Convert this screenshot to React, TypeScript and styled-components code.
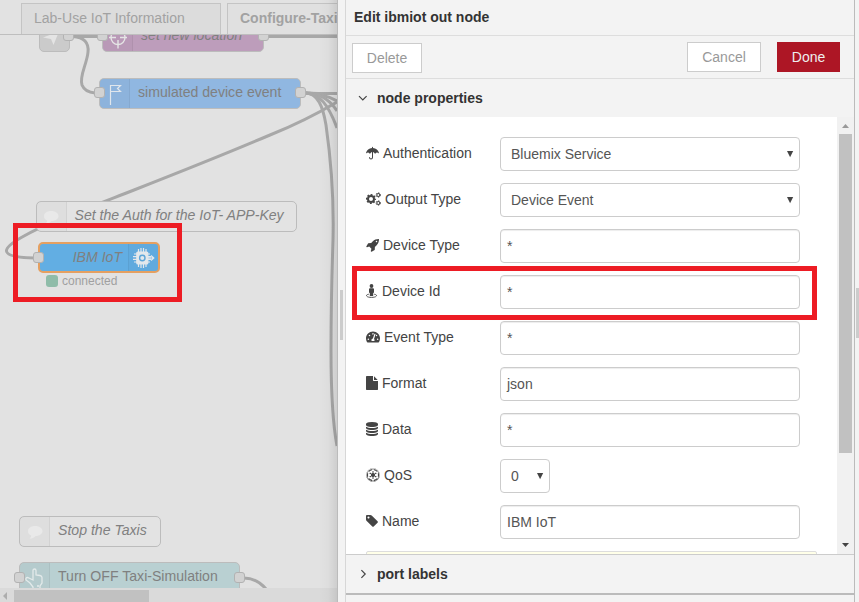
import React from 'react';
import styled, { createGlobalStyle, css } from 'styled-components';
import { FaTachometerAlt, FaEmpire } from 'react-icons/fa';

const Global = createGlobalStyle`
  * { box-sizing: border-box; }
  html, body { margin: 0; padding: 0; overflow: hidden; }
  body { font-family: "Liberation Sans", Arial, sans-serif; font-size: 14px; color: #444; }
`;

const Page = styled.div`
  position: relative;
  display: flex;
  width: 859px;
  height: 602px;
  background: #f3f3f3;
  overflow: hidden;
`;

/* ---------- workspace ---------- */

const Workspace = styled.section`
  width: 337px;
  flex: none;
  display: flex;
  flex-direction: column;
  position: relative;
  background: #e2e2e2;
  overflow: hidden;
`;

const EdgeShade = styled.div`
  position: absolute;
  top: 0;
  right: 0;
  bottom: 0;
  width: 18px;
  background: linear-gradient(to right, rgba(0, 0, 0, 0), rgba(0, 0, 0, 0.02) 50%, rgba(0, 0, 0, 0.09));
`;

const TabBar = styled.div`
  height: 35px;
  flex: none;
  display: flex;
  gap: 6px;
  padding: 3px 0 0 21px;
  border-bottom: 1px solid #bebebe;
`;

const Tab = styled.div<{ $active?: boolean }>`
  width: 200px;
  flex: none;
  border: 1px solid #c4c4c4;
  border-bottom: none;
  padding-left: 12px;
  line-height: 29px;
  white-space: nowrap;
  color: #a2a2a2;
  background: ${(p) => (p.$active ? '#e0e0e0' : '#dcdcdc')};
  font-weight: ${(p) => (p.$active ? 'bold' : 'normal')};
`;

const Canvas = styled.div`
  flex: 1;
  position: relative;
  overflow: hidden;
`;

const Wires = styled.svg`
  position: absolute;
  left: 0;
  top: 0;
  fill: none;
  stroke: #a8a8a8;
  stroke-width: 3;
`;

const Node = styled.div<{ $x: number; $y: number; $w: number; $bg: string; $selected?: boolean; $italic?: boolean }>`
  position: absolute;
  left: ${(p) => p.$x}px;
  top: ${(p) => p.$y}px;
  width: ${(p) => p.$w}px;
  height: 31px;
  display: flex;
  border-radius: 5px;
  border: ${(p) => (p.$selected ? '2px solid #e5a061' : '1.5px solid #bcbcbc')};
  background: ${(p) => p.$bg};
  color: #808080;
  font-style: ${(p) => (p.$italic ? 'italic' : 'normal')};
  white-space: nowrap;
`;

const NodeIcon = styled.div<{ $side?: 'right' }>`
  width: 30px;
  flex: none;
  display: flex;
  align-items: center;
  justify-content: center;
  background: rgba(0, 0, 0, 0.02);
  ${(p) => p.$side === 'right'
    ? css`order: 2; border-left: 1px solid rgba(0, 0, 0, 0.05);`
    : css`border-right: 1px solid rgba(0, 0, 0, 0.05);`}
`;

const NodeLabel = styled.span<{ $end?: boolean }>`
  flex: 1;
  padding: 0 ${(p) => (p.$end ? 6 : 8)}px 0 8px;
  line-height: 27px;
  font-size: 14.1px;
  text-align: ${(p) => (p.$end ? 'right' : 'left')};
`;

const Port = styled.i<{ $x: number; $y: number }>`
  position: absolute;
  left: ${(p) => p.$x}px;
  top: ${(p) => p.$y}px;
  width: 11px;
  height: 11px;
  border: 1.5px solid #b2b2b2;
  border-radius: 3px;
  background: #d2d2d2;
`;

const Status = styled.div`
  position: absolute;
  left: 46px;
  top: 240px;
  height: 12px;
  display: flex;
  align-items: center;
  gap: 4px;
  font-size: 12px;
  line-height: 12px;
  color: #a0a0a0;
`;

const StatusDot = styled.i`
  width: 12px;
  height: 12px;
  border-radius: 3px;
  background: #8fbca9;
`;

const HorizontalScroll = styled.div`
  height: 14px;
  flex: none;
  display: flex;
  align-items: center;
  background: #dadada;
`;

const ScrollLeft = styled.i`
  margin: 2px 7px 0 3px;
  border: 4px solid transparent;
  border-left: none;
  border-right-color: #adadad;
`;

const HorizontalThumb = styled.div`
  width: 135px;
  height: 12px;
  margin-top: 2px;
  background: #c1c1c1;
`;

/* ---------- editor tray ---------- */

const Separator = styled.div`
  width: 8px;
  flex: none;
  display: flex;
  align-items: center;
  padding: 27px 0 0 2px;
  border-left: 1px solid #bbb;
`;

const Grip = styled.div`
  width: 3px;
  height: 50px;
  background: #ccc;
`;

const Tray = styled.section`
  width: 510px;
  flex: none;
  display: flex;
  flex-direction: column;
  border-left: 1px solid #d7d7d7;
  border-right: 1px solid #bbb;
`;

const TrayHeader = styled.header`
  height: 36px;
  flex: none;
  padding-left: 8px;
  border-bottom: 1px solid #ddd;
  font-weight: bold;
  line-height: 34px;
  color: #333;
`;

const Toolbar = styled.div`
  height: 43px;
  flex: none;
  display: flex;
  align-items: flex-start;
  padding: 6px 14px 0 6px;
  border-bottom: 1px solid #ddd;
`;

const Button = styled.button<{ $kind?: 'delete' | 'primary' }>`
  height: 30px;
  width: 74px;
  padding: 0;
  border: 1px solid #ccc;
  background: #fff;
  color: #999;
  font: 14px/28px "Liberation Sans", Arial, sans-serif;
  ${(p) => p.$kind === 'delete' && css`width: 70px; margin: 1px auto 0 0;`}
  ${(p) => p.$kind === 'primary' && css`
    width: 63px;
    margin-left: 16px;
    background: #ad1625;
    border-color: #ad1625;
    color: #eee;
  `}
`;

const SectionHeader = styled.div<{ $footer?: boolean }>`
  height: ${(p) => (p.$footer ? 41 : 38)}px;
  flex: none;
  display: flex;
  align-items: center;
  gap: 9px;
  padding: ${(p) => (p.$footer ? '0 0 1px 12px' : '0 0 0 12px')};
  border-top: ${(p) => (p.$footer ? '1px solid #ccc' : 'none')};
  border-bottom: ${(p) => (p.$footer ? '2px solid #bbb' : 'none')};
  font-weight: bold;
  color: #333;
`;

const Body = styled.div`
  height: 437px;
  flex: none;
  display: flex;
  background: #fff;
  overflow: hidden;
`;

const Form = styled.div`
  flex: 1;
  padding: 20px 20px 0;
  display: flex;
  flex-direction: column;
`;

const FormRow = styled.div`
  height: 34px;
  margin-bottom: 12px;
  flex: none;
  display: flex;
`;

const Label = styled.label`
  width: 134px;
  flex: none;
  height: 32px;
  display: flex;
  align-items: center;
  gap: 4px;
  svg { display: block; flex: none; }
`;

const Field = styled.div<{ $select?: boolean; $small?: boolean }>`
  width: ${(p) => (p.$small ? 50 : 300)}px;
  height: 34px;
  display: flex;
  align-items: center;
  justify-content: space-between;
  padding: ${(p) => (p.$select ? '0 5px 0 10px' : '0 6px')};
  border: 1px solid #ccc;
  border-radius: 4px;
  box-shadow: ${(p) => (p.$select ? 'none' : 'inset 0 1px 1px rgba(0, 0, 0, 0.075)')};
  color: #555;
`;

const Tip = styled.div`
  width: 451px;
  height: 40px;
  flex: none;
  background: #ffffe8;
  border: 1px solid #ddd;
  border-radius: 2px;
`;

const VerticalScroll = styled.div`
  width: 17px;
  flex: none;
  display: flex;
  flex-direction: column;
  align-items: center;
  background: #f1f1f1;
`;

const VerticalThumb = styled.div`
  width: 13px;
  height: 319px;
  margin-bottom: auto;
  background: #c1c1c1;
`;

const Arrow = styled.svg`
  display: block;
  width: 7px;
  height: 4px;
  flex: none;
`;

const UpArrow = styled(Arrow)`margin: 7px 0 6px;`;
const DownArrow = styled(Arrow)`margin-bottom: 7px;`;

const RightEdge = styled.div`
  width: 4px;
  display: flex;
  align-items: center;
  justify-content: flex-end;
  padding-top: 24px;
`;

const Highlight = styled.div<{ $x: number; $y: number; $w: number; $h: number }>`
  position: absolute;
  left: ${(p) => p.$x}px;
  top: ${(p) => p.$y}px;
  width: ${(p) => p.$w}px;
  height: ${(p) => p.$h}px;
  border: 5px solid #ed1c24;
`;

/* ---------- drawings ---------- */

const Caret = () => (
  <svg width="8" height="8" viewBox="0 0 8 8"><path d="M1 1h6.200L4.100 7.200z" fill="#444" /></svg>
);

const Chevron = ({ open }: { open?: boolean }) => (
  <svg width="10" height="10" viewBox="0 0 10 10" fill="none" stroke="#444" strokeWidth="1.2">
    <path d={open ? 'M1 3.2l3.8 3.8L8.6 3.2' : 'M3.4 1.2L7.2 5 3.4 8.8'} />
  </svg>
);

const InjectIcon = () => (
  <svg width="20" height="24" viewBox="0 0 20 24" fill="#e4e4e4">
    <path d="M3 15.500L19 9.500L13.500 23L11 17zM3 3h4c4 0 6 3 5 7l-3 1c0-3-2-5-6-4z" />
  </svg>
);

const TargetIcon = () => (
  <svg width="20" height="26" viewBox="0 0 20 26" fill="none" stroke="#e5e5e5" strokeWidth="1.400">
    <circle cx="10" cy="13.500" r="7" /><path d="M10 3v8M10 16v8.500M1 13.500h7M12 13.500h7" />
  </svg>
);

const FlagIcon = () => (
  <svg width="16" height="24" viewBox="0 0 16 24" fill="none" stroke="#e0e6ec" strokeWidth="1.2">
    <path d="M3.500 23V3M3.500 3.500h10L10.500 6.500l3 3h-10" />
  </svg>
);

const BubbleIcon = () => (
  <svg width="20" height="20" viewBox="0 0 20 20" fill="#e9e9e9">
    <path d="M10 4c4.400 0 7.500 2.200 7.500 5s-3 5-7 5c-1.500 1.700-3.500 2.600-6 2.800 1-1 1.600-2 1.600-3.300C4 12.500 3 11 3 9c0-2.800 3-5 7-5z" />
  </svg>
);

const ChipIcon = () => (
  <svg width="22" height="20" viewBox="0 0 22 20" fill="none" stroke="#e3e8ec" strokeWidth="1.2">
    <path d="M5.500 1v18M8 0v20M10.500 0v20M13 1v18M1 6h16M0 8.700h18M0 11.300h18M1 14h16M15 10h6M18 7.500l2.800 2.500L18 12.500" />
    <rect x="3.800" y="4" width="11" height="12" rx="1" fill="#e3e8ec" />
    <circle cx="9.300" cy="10" r="2.700" stroke="#5da6d8" strokeWidth="1.4" />
  </svg>
);

const HandIcon = () => (
  <svg width="20" height="24" viewBox="0 0 20 24" fill="none" stroke="#e3eaea" strokeWidth="1.3">
    <path d="M8 10V4.500Q8 3 9.500 3T11 4.500V9l4 .5q2 .5 2 2V17l-2 3v4M8 24v-3l-3-4-4-3q-.5-2.500 1.500-2.500L6 13l2 1V9M12 20h2" />
  </svg>
);

type GlyphProps = { box: string; width: number; d: string };

const Glyph = ({ box, width, d }: GlyphProps) => (
  <svg width={width} height="14" viewBox={box} fill="#444"><path d={d} /></svg>
);

const Umbrella = () => (
  <svg width="13" height="14" viewBox="0 0 13 14" fill="#444">
    <path d="M6 1.500Q6 .8 6.500 .8T7 1.500V2.100C10 2.300 12.300 4.300 13 7.100Q12.900 7.500 12.500 7.300Q10.900 5.800 9.400 7.500Q9.100 7.900 8.800 7.500Q8 6.200 7 6.100V11.500Q6.900 13.400 5 13.400T3 11.500Q3 11 3.500 11T4 11.500Q4.100 12.400 5 12.400T6 11.500V6.100Q5 6.200 4.200 7.500Q3.900 7.900 3.600 7.500Q2.100 5.800 .5 7.300Q.1 7.500 0 7.100C.7 4.300 3 2.300 6 2.100z" />
  </svg>
);

const Gears = () => (
  <svg width="15" height="14" viewBox="0 0 15 14" fill="none" stroke="#444">
    <circle cx="5" cy="7" r="3" strokeWidth="2" />
    <circle cx="5" cy="7" r="4.400" strokeWidth="1.3" strokeDasharray="1.9 1.555" strokeDashoffset=".95" />
    <circle cx="12.300" cy="3" r="1.500" strokeWidth="1.1" />
    <circle cx="12.300" cy="3" r="2.300" strokeWidth=".8" strokeDasharray="1.2 1.208" />
    <circle cx="12.300" cy="11" r="1.500" strokeWidth="1.1" />
    <circle cx="12.300" cy="11" r="2.300" strokeWidth=".8" strokeDasharray="1.2 1.208" />
  </svg>
);

const StreetView = () => (
  <svg width="12" height="14" viewBox="0 0 12 14" fill="#444">
    <circle cx="5.500" cy="2" r="1.900" />
    <path d="M4 4.200h3q1 0 1 1v3q0 .6-.8.700V11.500q0 .5-.5.500H4.300q-.5 0-.5-.5V8.900Q3 8.800 3 8.200v-3q0-1 1-1z" />
    <path d="M2.800 10.200C.3 10.600.3 11.500.6 12c.7 1 2.700 1.400 4.900 1.400s4.200-.4 4.900-1.400c.3-.5.3-1.400-2.200-1.800" fill="none" stroke="#444" strokeWidth=".9" />
  </svg>
);

const ROCKET = 'M1440 448q0-40-28-68t-68-28-68 28-28 68 28 68 68 28 68-28 28-68zm224-288q0 249-75.500 430.500t-253.500 360.500q-81 80-195 176l-20 379q-2 16-16 26l-384 224q-7 4-16 4-12 0-23-9l-64-64q-13-14-8-32l85-276-281-281-276 85q-3 1-9 1-14 0-23-9l-64-64q-17-19-5-39l224-384q10-14 26-16l379-20q96-114 176-195 188-187 358-258t431-71q14 0 24 9.500t10 22.500z';
const FILE = 'M1152 512v-472q22 14 36 28l408 408q14 14 28 36h-472zm-128 32q0 40 28 68t68 28h544v1056q0 40-28 68t-68 28h-1344q-40 0-68-28t-28-68v-1600q0-40 28-68t68-28h800v544z';
const DATABASE = 'M896 768q237 0 443-43t325-127v170q0 69-103 128t-280 93.500-385 34.500-385-34.500-280-93.500-103-128v-170q119 84 325 127t443 43zm0 768q237 0 443-43t325-127v170q0 69-103 128t-280 93.500-385 34.500-385-34.500-280-93.500-103-128v-170q119 84 325 127t443 43zm0-384q237 0 443-43t325-127v170q0 69-103 128t-280 93.500-385 34.500-385-34.500-280-93.500-103-128v-170q119 84 325 127t443 43zm0-1152q208 0 385 34.500t280 93.500 103 128v128q0 69-103 128t-280 93.500-385 34.500-385-34.500-280-93.500-103-128v-128q0-69 103-128t280-93.500 385-34.500z';
const TAG = 'M576 448q0-53-37.500-90.500t-90.500-37.500-90.500 37.500-37.500 90.500 37.500 90.500 90.500 37.500 90.500-37.500 37.500-90.500zm1067 576q0 53-37 90l-491 492q-39 37-91 37-53 0-90-37l-715-716q-38-37-64.500-101t-26.500-117v-416q0-52 38-90t90-38h416q53 0 117 26.500t102 64.500l715 714q37 39 37 91z';

const rows = [
  { icon: <Umbrella />, label: 'Authentication', value: 'Bluemix Service', select: true },
  { icon: <Gears />, label: 'Output Type', value: 'Device Event', select: true },
  { icon: <Glyph box="0 0 1664 1792" width={13} d={ROCKET} />, label: 'Device Type', value: '*' },
  { icon: <StreetView />, label: 'Device Id', value: '*' },
  { icon: <FaTachometerAlt size={14} />, label: 'Event Type', value: '*' },
  { icon: <Glyph box="128 0 1536 1792" width={12} d={FILE} />, label: 'Format', value: 'json' },
  { icon: <Glyph box="128 0 1536 1792" width={12} d={DATABASE} />, label: 'Data', value: '*' },
  { icon: <FaEmpire size={14} />, label: 'QoS', value: '0', select: true, small: true },
  { icon: <Glyph box="128 0 1536 1792" width={12} d={TAG} />, label: 'Name', value: 'IBM IoT' },
];

export default function App() {
  return (
    <>
      <Global />
      <Page>
        <Workspace>
          <TabBar>
            <Tab>Lab-Use IoT Information</Tab>
            <Tab $active>Configure-Taxi</Tab>
          </TabBar>
          <Canvas>
            <Wires width="337" height="553" viewBox="0 35 337 553">
              <path d="M73 36.500H98M268 36.500H337" />
              <path d="M73 36.500C84 37 89 43 88 52C87 64 79 76 82 85C84 90 88 92.500 95 93" />
              <path d="M305 93C316 93.500 327 93.500 337 93.500" />
              <path d="M305 93C318 93 328 96 337 101" />
              <path d="M305 93C320 93 330 100 337 111" />
              <path d="M305 93C320 94 328 104 337 128" />
              <path d="M305 93C318 93 323 107 326 125C331 160 334 200 333 240C332 270 331 320 331 350C331 390 333 425 337 446" />
              <path d="M337 102C310 118 290 127 270 135C230 152 180 172 134 190C80 211 45 224 24 236C2 248 -4 257 34 258" />
            </Wires>
            <Node $x={39} $y={-14} $w={31} $bg="#cbcbcb"><InjectIcon /></Node>
            <Port $x={63} $y={-5} />
            <Node $x={102} $y={-14} $w={162} $bg="#bd9dbb" $italic>
              <NodeIcon><TargetIcon /></NodeIcon><NodeLabel>set new location</NodeLabel>
            </Node>
            <Port $x={97} $y={-5} />
            <Port $x={258} $y={-5} />
            <Node $x={99} $y={43} $w={202} $bg="#90b7e1">
              <NodeIcon><FlagIcon /></NodeIcon><NodeLabel>simulated device event</NodeLabel>
            </Node>
            <Port $x={94} $y={52} />
            <Port $x={295} $y={52} />
            <Node $x={35.5} $y={166} $w={261} $bg="#e3e3e3" $italic>
              <NodeIcon><BubbleIcon /></NodeIcon><NodeLabel>Set the Auth for the IoT- APP-Key</NodeLabel>
            </Node>
            <Node $x={38} $y={207} $w={122} $bg="#62aee3" $selected $italic>
              <NodeIcon $side="right"><ChipIcon /></NodeIcon><NodeLabel $end>IBM IoT</NodeLabel>
            </Node>
            <Port $x={33} $y={217} />
            <Status><StatusDot />connected</Status>
            <Node $x={19} $y={481} $w={142} $bg="#e3e3e3" $italic>
              <NodeIcon><BubbleIcon /></NodeIcon><NodeLabel>Stop the Taxis</NodeLabel>
            </Node>
            <Wires width="337" height="553" viewBox="0 35 337 553">
              <path d="M244 578C254 578 260 582 266 589" />
            </Wires>
            <Node $x={19} $y={527} $w={221} $bg="#b9d0d2">
              <NodeIcon><HandIcon /></NodeIcon><NodeLabel>Turn OFF Taxi-Simulation</NodeLabel>
            </Node>
            <Port $x={14} $y={537} />
            <Port $x={234} $y={537} />
          </Canvas>
          <HorizontalScroll><ScrollLeft /><HorizontalThumb /></HorizontalScroll>
          <EdgeShade />
        </Workspace>
        <Separator><Grip /></Separator>
        <Tray>
          <TrayHeader>Edit ibmiot out node</TrayHeader>
          <Toolbar>
            <Button $kind="delete">Delete</Button>
            <Button>Cancel</Button>
            <Button $kind="primary">Done</Button>
          </Toolbar>
          <SectionHeader><Chevron open />node properties</SectionHeader>
          <Body>
            <Form>
              {rows.map((r) => (
                <FormRow key={r.label}>
                  <Label>{r.icon}{r.label}</Label>
                  <Field $select={r.select} $small={r.small}>
                    {r.value}
                    {r.select && <Caret />}
                  </Field>
                </FormRow>
              ))}
              <Tip />
            </Form>
            <VerticalScroll>
              <UpArrow viewBox="0 0 7 4"><path d="M0 4L3.500 0L7 4z" fill="#999" /></UpArrow>
              <VerticalThumb />
              <DownArrow viewBox="0 0 7 4"><path d="M0 0h7L3.500 4z" fill="#444" /></DownArrow>
            </VerticalScroll>
          </Body>
          <SectionHeader $footer><Chevron />port labels</SectionHeader>
        </Tray>
        <RightEdge><Grip /></RightEdge>
        <Highlight $x={13} $y={223} $w={169} $h={79} />
        <Highlight $x={352} $y={266} $w={465} $h={54} />
      </Page>
    </>
  );
}
